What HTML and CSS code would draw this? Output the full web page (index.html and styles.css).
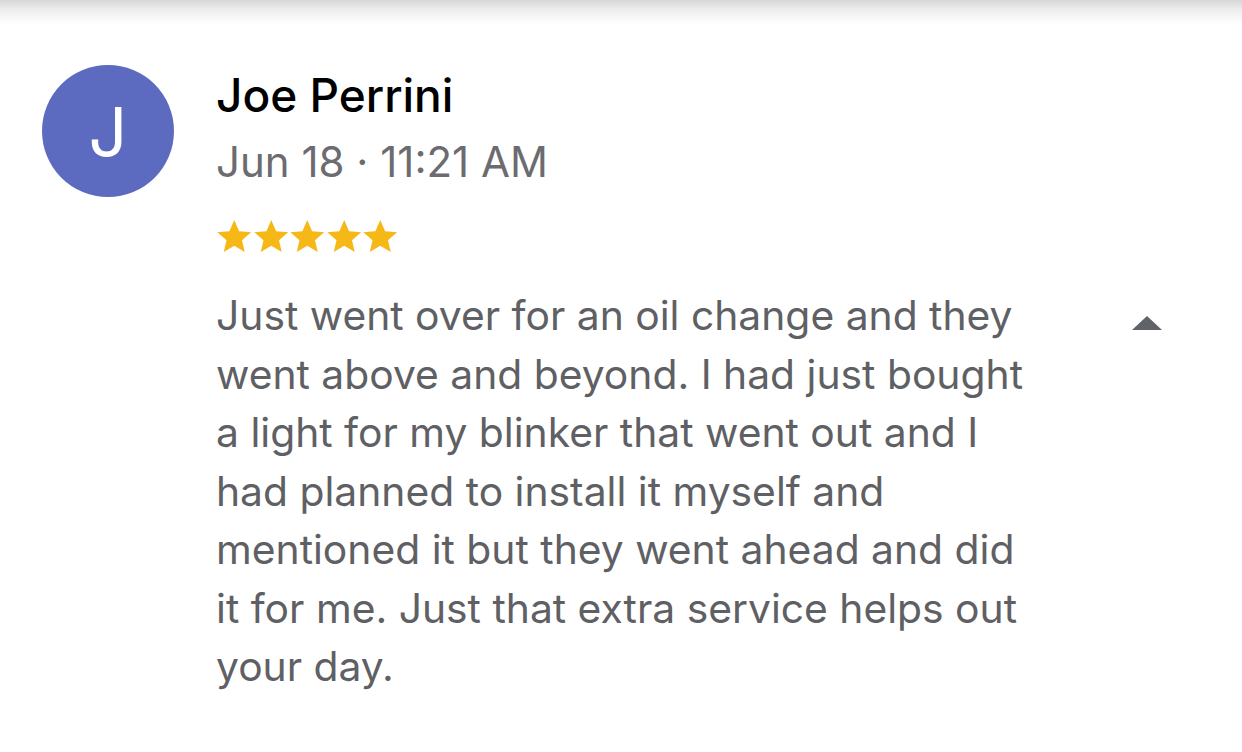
FILE: index.html
```html
<!DOCTYPE html>
<html>
<head>
<meta charset="utf-8">
<link rel="stylesheet" href="styles.css">
</head>
<body>
<div class="topshade"></div>
<div class="review">
  <div class="avatar">J</div>
  <div class="content">
    <div class="name">Joe Perrini</div>
    <div class="date">Jun 18 · 11:21 AM</div>
    <div class="stars">
      <svg viewBox="0 0 24 24"><path d="M12 1.2l3.2 7.3 7.9.7-6 5.2 1.8 7.8L12 18.1l-6.9 4.1 1.8-7.8-6-5.2 7.9-.7z"/></svg>
      <svg viewBox="0 0 24 24"><path d="M12 1.2l3.2 7.3 7.9.7-6 5.2 1.8 7.8L12 18.1l-6.9 4.1 1.8-7.8-6-5.2 7.9-.7z"/></svg>
      <svg viewBox="0 0 24 24"><path d="M12 1.2l3.2 7.3 7.9.7-6 5.2 1.8 7.8L12 18.1l-6.9 4.1 1.8-7.8-6-5.2 7.9-.7z"/></svg>
      <svg viewBox="0 0 24 24"><path d="M12 1.2l3.2 7.3 7.9.7-6 5.2 1.8 7.8L12 18.1l-6.9 4.1 1.8-7.8-6-5.2 7.9-.7z"/></svg>
      <svg viewBox="0 0 24 24"><path d="M12 1.2l3.2 7.3 7.9.7-6 5.2 1.8 7.8L12 18.1l-6.9 4.1 1.8-7.8-6-5.2 7.9-.7z"/></svg>
    </div>
    <div class="bodyrow">
      <p class="text">Just went over for an oil change and they<br>went above and beyond. I had just bought<br>a light for my blinker that went out and I<br>had planned to install it myself and<br>mentioned it but they went ahead and did<br>it for me. Just that extra service helps out<br>your day.</p>
      <div class="caret"></div>
    </div>
  </div>
</div>
</body>
</html>
```
FILE: styles.css
```css
html, body {
  margin: 0;
  padding: 0;
  background: #ffffff;
  width: 1242px;
  height: 752px;
  overflow: hidden;
  font-family: Inter, "Noto Sans", sans-serif;
}
.topshade {
  height: 26px;
  background: linear-gradient(to bottom, #d6d6d6 0%, #ececec 35%, #fafafa 75%, #ffffff 100%);
}
.review {
  display: flex;
  gap: 42px;
  padding: 39px 0 0 42px;
}
.avatar {
  width: 132px;
  height: 132px;
  border-radius: 50%;
  background: #5c6bc0;
  color: #fff;
  font-size: 68px;
  line-height: 1;
  font-weight: 400;
  display: flex;
  align-items: center;
  justify-content: center;
  flex-shrink: 0;
}
.content {
  flex: 1;
  padding-top: 2px;
}
.name {
  font-size: 46px;
  line-height: 56px;
  color: #000;
  font-weight: 500;
}
.date {
  font-size: 42px;
  line-height: 56px;
  color: #6b6b70;
  margin-top: 11px;
}
.stars {
  display: flex;
  margin-top: 28px;
  margin-left: 0;
}
.stars svg {
  display: block;
  width: 36.5px;
  height: 37px;
  fill: #f6b817;
}
.bodyrow {
  display: flex;
  margin-top: 31px;
}
.text {
  margin: 0;
  font-size: 40.8px;
  line-height: 58.5px;
  color: #5f6064;
  width: 916px;
  flex-shrink: 0;
}
.caret {
  width: 0;
  height: 0;
  border-left: 15px solid transparent;
  border-right: 15px solid transparent;
  border-bottom: 14px solid #5f6368;
  margin-top: 30px;
}
```
